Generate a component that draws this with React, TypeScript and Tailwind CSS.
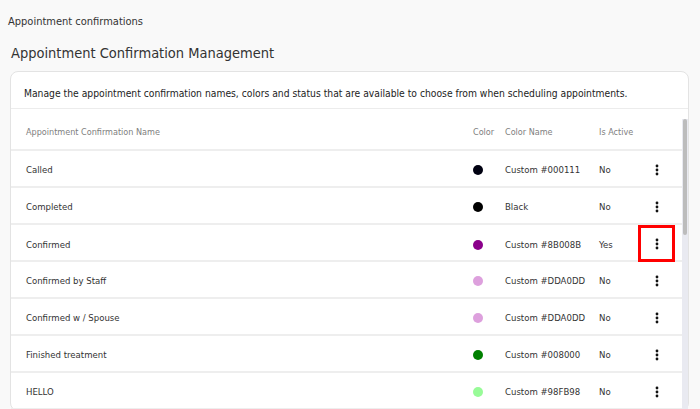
import React from 'react';

type Confirmation = {
  name: string;
  color: string;
  colorName: string;
  isActive: boolean;
};

const confirmations: Confirmation[] = [
  { name: 'Called', color: '#000111', colorName: 'Custom #000111', isActive: false },
  { name: 'Completed', color: '#000000', colorName: 'Black', isActive: false },
  { name: 'Confirmed', color: '#8B008B', colorName: 'Custom #8B008B', isActive: true },
  { name: 'Confirmed by Staff', color: '#DDA0DD', colorName: 'Custom #DDA0DD', isActive: false },
  { name: 'Confirmed w / Spouse', color: '#DDA0DD', colorName: 'Custom #DDA0DD', isActive: false },
  { name: 'Finished treatment', color: '#008000', colorName: 'Custom #008000', isActive: false },
  { name: 'HELLO', color: '#98FB98', colorName: 'Custom #98FB98', isActive: false },
];

const gridCols = 'grid grid-cols-[462px_32px_94px_40px_36px_1fr]';

function Kebab() {
  return (
    <svg width="4" height="12" viewBox="0 0 4 12" fill="#111111">
      <circle cx="2" cy="2" r="1.4" />
      <circle cx="2" cy="6" r="1.4" />
      <circle cx="2" cy="10" r="1.4" />
    </svg>
  );
}

export default function App() {
  return (
    <div className="h-[409px] overflow-hidden bg-[#f9f9f9] font-['DejaVu_Sans_Condensed','DejaVu_Sans',sans-serif]">
      <div className="pl-[8px] pt-[15px] text-[11px] leading-[14px] text-[#333333]">
        Appointment confirmations
      </div>
      <h1 className="mt-[15px] pl-[11px] text-[14.5px] leading-[18px] font-normal text-[#333333]">
        Appointment Confirmation Management
      </h1>

      <div className="ml-[10px] mt-[9px] w-[679px] rounded-lg border border-[#e3e3e3] bg-white">
        <div className="h-[37px] border-b border-[#ececec] pl-[13px] pt-[15px] text-[10.25px] leading-[12px] text-[#222222]">
          Manage the appointment confirmation names, colors and status that are available to choose
          from when scheduling appointments.
        </div>

        <div className="flex">
          <div className="flex-1">
            <div
              className={`${gridCols} h-[42px] border-b-2 border-[#eeeeee] pt-[17px] text-[9px] leading-[12px] text-[#808080]`}
            >
              <div className="pl-[15px]">Appointment Confirmation Name</div>
              <div>Color</div>
              <div>Color Name</div>
              <div>Is Active</div>
              <div />
              <div />
            </div>

            {confirmations.map((c) => (
              <div
                key={c.name}
                className={`${gridCols} h-[37px] items-center border-b-2 border-[#eeeeee] pt-[2px] text-[9.5px] leading-[12px] text-[#333333]`}
              >
                <div className="pl-[15px]">{c.name}</div>
                <div>
                  <span
                    className="block h-[10px] w-[10px] rounded-full"
                    style={{ backgroundColor: c.color }}
                  />
                </div>
                <div>{c.colorName}</div>
                <div>{c.isActive ? 'Yes' : 'No'}</div>
                {c.name === 'Confirmed' ? (
                  <div className="-mt-[2px] -ml-[1px] flex h-[37px] items-center justify-center self-start border-[3px] border-[#ff0000]">
                    <Kebab />
                  </div>
                ) : (
                  <div className="flex items-center justify-center">
                    <Kebab />
                  </div>
                )}
                <div />
              </div>
            ))}
          </div>

          <div className="flex w-[6px] flex-col pt-[10px]">
            <div className="flex-1 bg-[#e9eaf1]">
              <div className="ml-[1px] h-[116px] w-[4px] rounded-full bg-[#bcbcbc]" />
            </div>
          </div>
        </div>
      </div>
    </div>
  );
}
